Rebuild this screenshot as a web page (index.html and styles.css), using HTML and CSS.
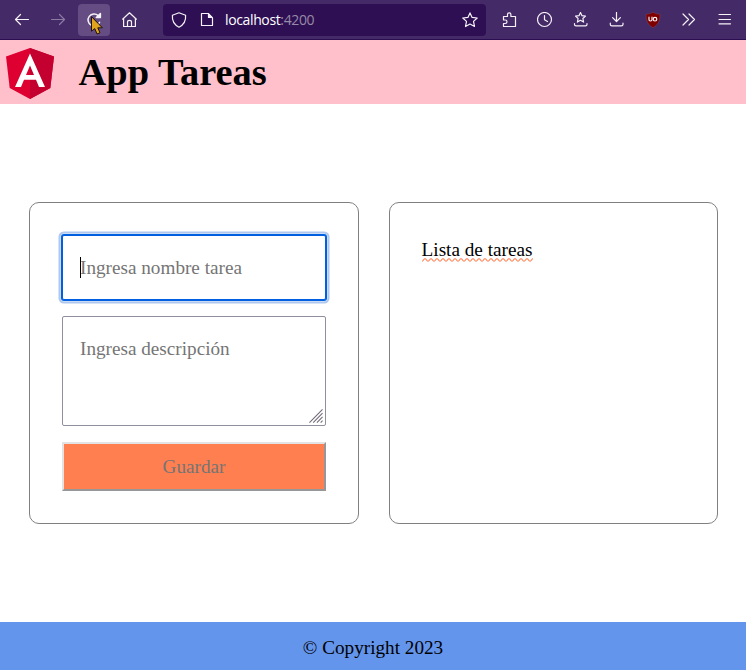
FILE: index.html
```html
<!DOCTYPE html>
<html lang="es">
<head>
<meta charset="utf-8">
<title>App Tareas</title>
<link rel="stylesheet" href="styles.css">
</head>
<body>
<div class="toolbar">
  <span class="tool"><svg viewBox="0 0 16 16"><path d="M14.5 7.5H1.5M6.5 2.5L1.5 7.5L6.5 12.5"/></svg></span>
  <span class="tool disabled"><svg viewBox="0 0 16 16"><path d="M1.5 7.5H14.5M9.5 2.5L14.5 7.5L9.5 12.5"/></svg></span>
  <span class="tool"><span class="reload"><svg viewBox="0 0 16 16"><path d="M13.6 10.2A6 6 0 1 1 12.2 3.6"/><path class="solid" d="M14.4 1.5V5.6H10.3Z"/></svg>
    <svg class="cursor" viewBox="0 0 14 20"><path d="M1.5 1V15.2L4.8 12.6L7 18L10 16.8L7.8 11.8H12Z"/></svg></span></span>
  <span class="tool"><svg viewBox="0 0 16 16"><path d="M.6 7.2L7.5 .8L14.4 7.2M1.6 6.5V14.5H13.4V6.5M5.5 14.5V10Q5.5 8.3 7.5 8.3Q9.5 8.3 9.5 10V14.5"/></svg></span>
  <div class="address">
    <svg viewBox="0 0 16 16"><path d="M8 .8L14.6 3.3Q15.3 11.5 8 15.2Q.7 11.5 1.4 3.3Z"/></svg>
    <svg class="page" viewBox="0 0 16 16"><path d="M2.5 1.5H9.2L13.5 5.8V13.5H2.5Z"/><path class="solid" d="M9.5 2V5.5H13Z"/></svg>
    <span class="url">localhost<span class="port">:4200</span></span>
    <svg class="star" viewBox="0 0 16 16"><path d="M8 .9L10.1 5.4L15.2 6L11.5 9.4L12.5 14.5L8 12L3.5 14.5L4.5 9.4L.8 6L5.9 5.4Z"/></svg>
  </div>
  <span class="tool"><svg viewBox="0 0 16 16"><path d="M2.5 4.5H6.5V2.6Q6.5 .9 8.2 .9Q9.9 .9 9.9 2.6V4.5H14.5V14.5H2.5V11.5H4.2Q6 11.5 6 9.8Q6 8 4.2 8H2.5Z"/></svg></span>
  <span class="tool"><svg viewBox="0 0 16 16"><circle cx="7.5" cy="7.5" r="7"/><path d="M7.5 3.5V7.8L10.5 9.5"/></svg></span>
  <span class="tool"><svg viewBox="0 0 16 16"><path d="M7.5 .4L9 3.7L12.5 4.1L9.9 6.5L10.6 10.1L7.5 8.3L4.4 10.1L5.1 6.5L2.5 4.1L6 3.7ZM1.5 11.5V12.5Q1.5 13.8 3 13.8H12.5Q14 13.8 14 12.5V11.5"/></svg></span>
  <span class="tool"><svg viewBox="0 0 16 16"><path d="M7.5 .5V9.5M3.6 5.6L7.5 9.5L11.4 5.6M1.3 11.2V12.5Q1.3 13.8 3 13.8H12.3Q14 13.8 14 12.5V11.2"/></svg></span>
  <span class="tool"><svg class="ublock" viewBox="0 0 16 16"><path class="shield" d="M8 .2Q11 2.3 15 2.3Q15.5 12 8 15.8Q.5 12 1 2.3Q5 2.3 8 .2Z"/><path class="mark" d="M4 5.2V7.8Q4 9 5.5 9Q7 9 7 7.8V5.2"/><circle class="mark" cx="10" cy="7.2" r="1.8"/></svg></span>
  <span class="tool"><svg viewBox="0 0 16 16"><path d="M2 2L7.5 7.5L2 13M8 2L13.5 7.5L8 13"/></svg></span>
  <span class="tool"><svg viewBox="0 0 16 16"><path d="M2 2.5H13.5M2 7.5H13.5M2 11.8H13.5"/></svg></span>
</div>
<header class="header">
  <svg class="logo" viewBox="0 0 48 51"><path fill="#dd0031" d="M24 0L48 8.5L44.3 40L24 51L3.7 40L0 8.5Z"/><path fill="#c3002f" d="M24 0L48 8.5L44.3 40L24 51Z"/><path fill="#fff" fill-rule="evenodd" d="M24 5.6L9 39H15L18 31.8H30L33 39H39ZM24 17.4L28 27H20Z"/></svg>
  <h1 class="title">App Tareas</h1>
</header>
<main class="main">
  <form class="card form">
    <label class="name-field"><input class="control name" type="text" placeholder="Ingresa nombre tarea"><span class="caret"></span></label>
    <div class="description-field"><textarea class="control description" placeholder="Ingresa descripción"></textarea><svg class="grip" viewBox="0 0 15 15"><path d="M.5 14.5L14.5 .5M4.5 14.5L14.5 4.5M8.5 14.5L14.5 8.5M12.5 14.5L14.5 12.5"/></svg></div>
    <button class="save" type="button" disabled>Guardar</button>
  </form>
  <section class="card list"><span class="list-title">Lista de tareas<svg class="wave" viewBox="0 0 111 4"><defs><pattern id="ripple" width="6" height="4" patternUnits="userSpaceOnUse"><path d="M-1.5 2Q0 4.4 1.5 2T4.5 2T7.5 2"/></pattern></defs><rect width="111" height="4" fill="url(#ripple)"/></svg></span></section>
</main>
<footer class="footer">© Copyright 2023</footer>
</body>
</html>
```
FILE: styles.css
```css
* { box-sizing: border-box; }
body {
  margin: 0;
  height: 670px;
  display: flex;
  flex-direction: column;
  overflow: hidden;
  font: 19.2px/22px "Liberation Serif", serif;
  color: #000;
  background: #fff;
}
.toolbar {
  height: 40px;
  flex: none;
  display: flex;
  align-items: center;
  padding-left: 4px;
  background: #452a68;
  border-bottom: 1px solid #2b0d51;
}
.toolbar svg {
  width: 16px;
  height: 16px;
  flex: none;
  fill: none;
  stroke: #f5f2f8;
  stroke-width: 1.2;
  stroke-linejoin: round;
  stroke-linecap: round;
}
.toolbar .solid { fill: #f5f2f8; }
.tool {
  width: 36px;
  height: 36px;
  flex: none;
  display: flex;
  align-items: center;
  justify-content: center;
}
.disabled svg { opacity: .4; }
.reload {
  position: relative;
  width: 32px;
  height: 32px;
  display: flex;
  align-items: center;
  justify-content: center;
  border-radius: 4px;
  background: #654c83;
}
.toolbar .reload svg { stroke-width: 1.5; }
.toolbar .reload .cursor {
  position: absolute;
  left: 12px;
  top: 12px;
  width: 14px;
  height: 20px;
  fill: #e0a51c;
  stroke: #21140c;
  stroke-width: 1;
}
.address {
  width: 323px;
  height: 32px;
  flex: none;
  display: flex;
  align-items: center;
  margin: 0 5px 0 15px;
  padding: 0 8px;
  border-radius: 4px;
  background: #2e0f53;
}
.address .page { margin-left: 12px; }
.url {
  margin-left: 10px;
  font: 14px/20px "Open Sans", "Noto Sans", sans-serif;
  letter-spacing: -.37px;
  color: #fff;
}
.port { color: #968aa6; }
.address .star { margin-left: auto; }
.toolbar .ublock .shield { fill: #800000; stroke: #775568; stroke-width: .4; }
.ublock .mark { stroke-width: 1.2; }
.header {
  height: 64px;
  flex: none;
  display: flex;
  align-items: center;
  padding-left: 6px;
  background: #ffc0cb;
}
.logo { width: 48px; height: 51px; margin-top: 3px; }
.title { margin: 0 0 0 24.6px; font-size: 38.4px; line-height: 44px; font-weight: bold; }
.main {
  flex: 1;
  display: grid;
  grid-template-columns: 330px 329px;
  gap: 30px;
  padding: 98px 28px 98px 29px;
}
.card { border: 1px solid #808080; border-radius: 10px; }
.form {
  display: flex;
  flex-direction: column;
  gap: 16px;
  padding: 32px;
}
.control {
  display: block;
  width: 100%;
  margin: 0;
  font: inherit;
  outline: none;
  background: #fff;
  border: 1px solid #8f8f9d;
  border-radius: 2px;
}
.control::placeholder { color: #757575; opacity: 1; }
.name-field { position: relative; }
.name {
  height: 65px;
  padding: 0 17px;
  border-color: #0060df;
  box-shadow: 0 0 0 1px #0060df, 0 0 0 1.5px #e6effc, 0 0 0 3.5px #b0c8ed;
}
.caret { position: absolute; left: 18px; top: 22px; width: 1px; height: 21px; background: #000; }
.description-field { position: relative; }
.description { height: 110px; padding: 21px 17px; resize: none; overflow: hidden; }
.grip {
  position: absolute;
  right: 3px;
  bottom: 3px;
  width: 14px;
  height: 14px;
  fill: none;
  stroke: #746c78;
  stroke-width: 1.2;
}
.save {
  width: 100%;
  height: 49px;
  padding: 0;
  font: inherit;
  color: #757575;
  background: #ff7f50;
  border: 2px solid;
  border-color: #e3e3e3 #979797 #979797 #e3e3e3;
}
.list { padding: 36px 31.6px; }
.list-title { position: relative; display: inline-block; }
.wave {
  position: absolute;
  left: 0;
  top: 19px;
  width: 111px;
  height: 4px;
  fill: none;
  stroke: #ff7f50;
  stroke-width: 1.1;
}
.wave rect { stroke: none; }
.footer {
  height: 48px;
  flex: none;
  display: flex;
  align-items: center;
  justify-content: center;
  padding-top: 4px;
  background: #6495ed;
}
```
